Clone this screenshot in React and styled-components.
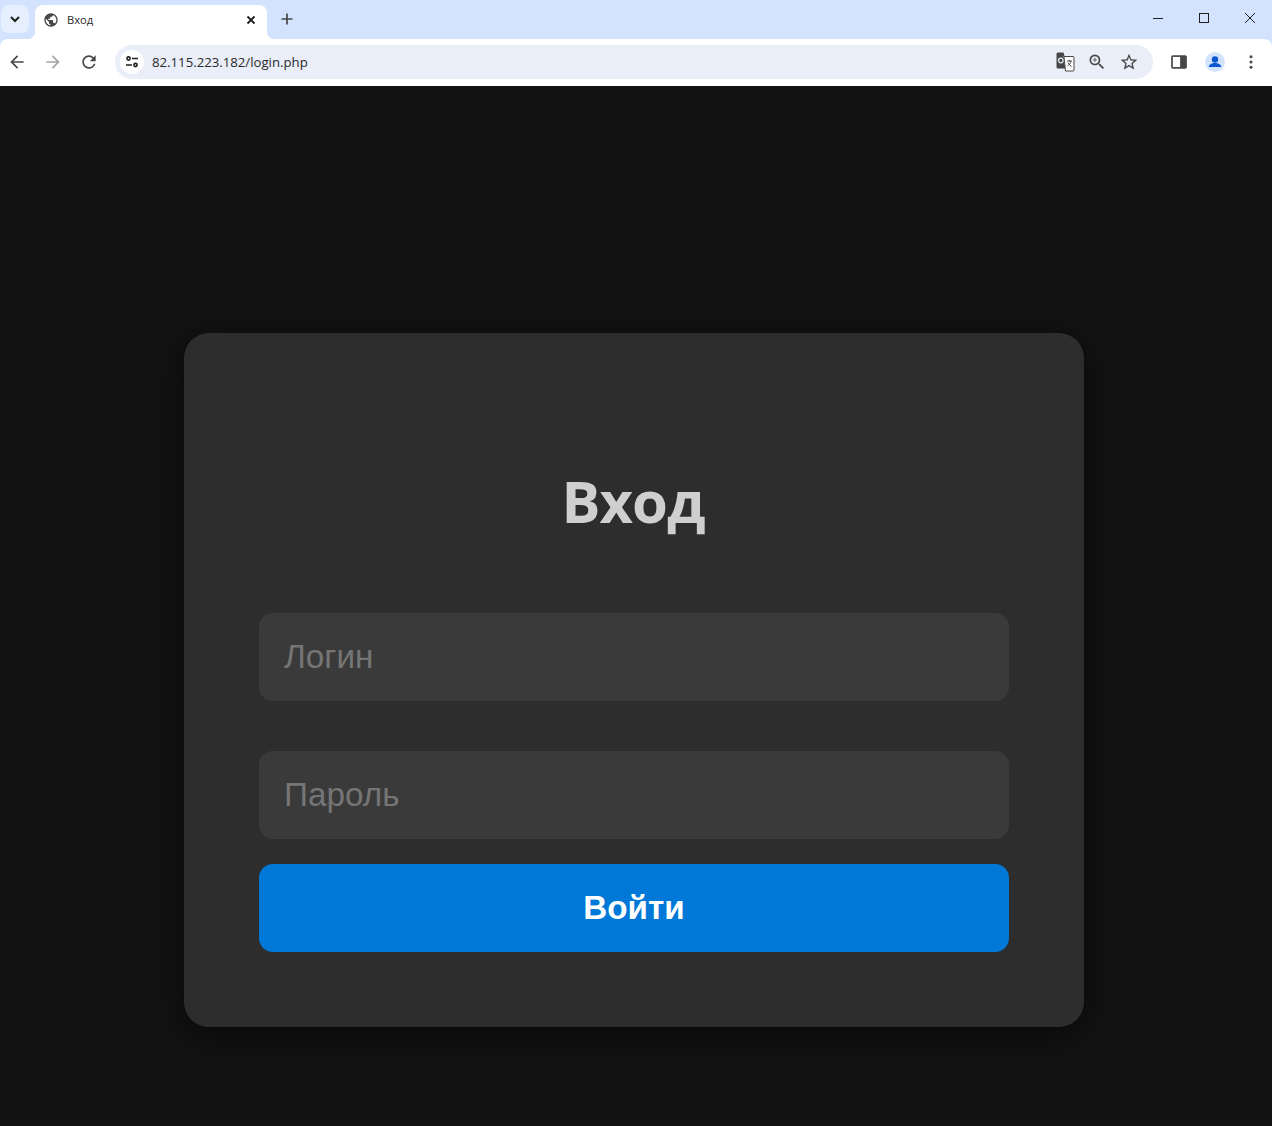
import React from "react";
import styled, { createGlobalStyle } from "styled-components";

const Global = createGlobalStyle`
  html, body { margin: 0; padding: 0; background: #121212; overflow: hidden; }
  * { box-sizing: border-box; }
`;

const Shell = styled.div`
  width: 1272px;
  height: 1126px;
  display: flex;
  flex-direction: column;
  background: #121212;
`;

const Chrome = styled.header`
  background: #d3e3fd;
  flex: none;
`;

const TabStrip = styled.div`
  height: 39px;
  display: flex;
  align-items: flex-start;
  padding-left: 1px;
`;

const TabSearch = styled.button`
  width: 28px;
  height: 28px;
  margin-top: 5px;
  border: 0;
  padding: 0;
  border-radius: 8px;
  background: #e6effe;
  display: flex;
  align-items: center;
  justify-content: center;
`;

const Tab = styled.div`
  position: relative;
  width: 232px;
  height: 34px;
  margin-top: 5px;
  margin-left: 6px;
  padding: 0 8px 5px;
  background: #fff;
  border-radius: 8px 8px 0 0;
  display: flex;
  align-items: center;
  gap: 8px;
  &::before, &::after {
    content: "";
    position: absolute;
    bottom: 0;
    width: 8px;
    height: 8px;
  }
  &::before { left: -8px; background: radial-gradient(circle at 0 0, transparent 8px, #fff 8.5px); }
  &::after { right: -8px; background: radial-gradient(circle at 100% 0, transparent 8px, #fff 8.5px); }
`;

const TabTitle = styled.span`
  flex: 1;
  font: 11.2px/16px "Open Sans", "Noto Sans", sans-serif;
  color: #2a2a2a;
`;

const NewTab = styled.button`
  width: 28px;
  height: 28px;
  margin: 5px 0 0 6px;
  border: 0;
  padding: 0;
  background: transparent;
  display: flex;
  align-items: center;
  justify-content: center;
`;

const Spacer = styled.div`
  flex: 1;
`;

const WindowControl = styled.div`
  width: 46px;
  height: 36px;
  display: flex;
  align-items: center;
  justify-content: center;
  &:last-child { margin-right: -1px; }
`;

const Toolbar = styled.div`
  height: 47px;
  background: #fff;
  border-radius: 8px 8px 0 0;
  display: flex;
  align-items: center;
  padding: 0 3px 1px 0;
`;

const NavButton = styled.button`
  width: 36px;
  height: 36px;
  border: 0;
  padding: 0;
  background: transparent;
  display: flex;
  align-items: center;
  justify-content: center;
  &:first-child { margin-left: -1px; }
`;

const Omnibox = styled.div`
  flex: 1;
  height: 34px;
  margin: 0 8px 0 8px;
  padding: 0 8px 0 5px;
  border-radius: 17px;
  background: #e9eef8;
  display: flex;
  align-items: center;
`;

const SiteChip = styled.div`
  width: 24px;
  height: 24px;
  border-radius: 50%;
  background: #fff;
  display: flex;
  align-items: center;
  justify-content: center;
  margin-right: 8px;
`;

const Url = styled.span`
  flex: 1;
  font: 13.2px "Open Sans", "Noto Sans", sans-serif;
  color: #2a2a2a;
`;

const OmniIcon = styled.div`
  width: 32px;
  height: 32px;
  display: flex;
  align-items: center;
  justify-content: center;
`;

const Main = styled.main`
  flex: 1;
  display: flex;
  justify-content: center;
  align-items: flex-start;
  padding: 247px 4px 0 0;
`;

const Card = styled.form`
  width: 900px;
  height: 694px;
  padding: 75px;
  border-radius: 25px;
  background: #2d2d2d;
  box-shadow: 0 8px 32px rgba(0, 0, 0, 0.5);
  display: flex;
  flex-direction: column;
`;

const Title = styled.h1`
  margin: 0;
  height: 205px;
  padding: 49px 2px 0 0;
  text-align: center;
  font: 700 58px/1.5 "Open Sans", "Noto Sans", sans-serif;
  letter-spacing: -1px;
  color: #cfcfcf;
`;

const Field = styled.input`
  display: block;
  width: 100%;
  height: 88px;
  margin-bottom: ${(p) => p.$gap}px;
  padding: 0 25px;
  border: 0;
  border-radius: 14px;
  outline: none;
  background: #3a3a3a;
  color: #d4d4d4;
  font: 33.3px "Liberation Sans", Arial, sans-serif;
  &::placeholder { color: #757575; opacity: 1; }
`;

const Submit = styled.button`
  width: 100%;
  height: 88px;
  border: 0;
  border-radius: 14px;
  background: #0078d7;
  color: #fff;
  font: 700 33.2px "Liberation Sans", Arial, sans-serif;
`;

const Icon = ({ size = 24, color = "#474747", children, vb = "0 0 24 24" }) => (
  <svg width={size} height={size} viewBox={vb} fill={color}>{children}</svg>
);

export default function App() {
  return (
    <Shell>
      <Global />
      <Chrome>
        <TabStrip>
          <TabSearch>
            <Icon size={14} vb="0 0 14 14" color="none">
              <path d="M3 5l4 4 4-4" stroke="#1f1f1f" strokeWidth="2" fill="none" />
            </Icon>
          </TabSearch>
          <Tab>
            <Icon size={16} color="#474747">
              <path d="M12 2C6.48 2 2 6.48 2 12s4.48 10 10 10 10-4.48 10-10S17.52 2 12 2zm-1 17.93c-3.95-.49-7-3.85-7-7.93 0-.62.08-1.21.21-1.79L9 15v1c0 1.1.9 2 2 2v1.93zm6.9-2.54c-.26-.81-1-1.39-1.9-1.39h-1v-3c0-.55-.45-1-1-1H8v-2h2c.55 0 1-.45 1-1V7h2c1.1 0 2-.9 2-2v-.41c2.93 1.19 5 4.06 5 7.41 0 2.08-.8 3.97-2.1 5.39z" />
            </Icon>
            <TabTitle>Вход</TabTitle>
            <Icon size={16} vb="0 0 16 16" color="none">
              <path d="M4.500 4.500l7 7M11.500 4.500l-7 7" stroke="#1f1f1f" strokeWidth="1.800" fill="none" />
            </Icon>
          </Tab>
          <NewTab>
            <Icon size={16} vb="0 0 16 16" color="none">
              <path d="M8 2.500v11M2.500 8h11" stroke="#474747" strokeWidth="1.700" fill="none" />
            </Icon>
          </NewTab>
          <Spacer />
          <WindowControl>
            <Icon size={12} vb="0 0 12 12" color="none"><path d="M1 6.500h10" stroke="#1f1f1f" fill="none" /></Icon>
          </WindowControl>
          <WindowControl>
            <Icon size={12} vb="0 0 12 12" color="none"><rect x="1.500" y="1.500" width="9" height="9" stroke="#1f1f1f" fill="none" /></Icon>
          </WindowControl>
          <WindowControl>
            <Icon size={12} vb="0 0 12 12" color="none"><path d="M1 1l10 10M11 1L1 11" stroke="#1f1f1f" fill="none" /></Icon>
          </WindowControl>
        </TabStrip>
        <Toolbar>
          <NavButton>
            <Icon size={20}><path d="M20 11H7.830l5.590-5.590L12 4l-8 8 8 8 1.410-1.410L7.830 13H20v-2z" /></Icon>
          </NavButton>
          <NavButton>
            <Icon size={20} color="#a4a4a4"><path d="M4 11h12.170l-5.590-5.590L12 4l8 8-8 8-1.410-1.410L16.170 13H4v-2z" /></Icon>
          </NavButton>
          <NavButton>
            <Icon size={20}><path d="M17.650 6.350A7.958 7.958 0 0 0 12 4c-4.420 0-7.990 3.580-7.990 8s3.570 8 7.990 8c3.730 0 6.840-2.550 7.730-6h-2.080A5.990 5.990 0 0 1 12 18c-3.310 0-6-2.690-6-6s2.690-6 6-6c1.660 0 3.140.69 4.220 1.780L13 11h7V4l-2.350 2.350z" /></Icon>
          </NavButton>
          <Omnibox>
            <SiteChip>
              <Icon size={16} vb="0 0 16 16" color="none">
                <g stroke="#1f1f1f" strokeWidth="1.600" fill="none">
                  <circle cx="4.500" cy="4.500" r="1.600" />
                  <path d="M8 4.500h6M2 11h6" />
                  <circle cx="11.500" cy="11" r="1.600" />
                </g>
              </Icon>
            </SiteChip>
            <Url>82.115.223.182/login.php</Url>
            <OmniIcon>
              <Icon size={20} vb="0 0 20 20" color="none">
                <path d="M1.500 2A1.500 1.500 0 0 1 3 .5h5.500l1 3.500h-1l2 12.500H3A1.500 1.500 0 0 1 1.500 15z" fill="#474747" />
                <circle cx="5.800" cy="8.500" r="2.300" fill="none" stroke="#e9eef8" strokeWidth="1.200" />
                <path d="M9 4.500h9a1 1 0 0 1 1 1v12.500a1 1 0 0 1-1 1h-7.500z" fill="#fff" stroke="#474747" strokeWidth="1" />
                <path d="M12 9h5M14.500 8v1M16 9c-.5 2.500-2 4-3.500 5M13 10.500c.7 1.600 2 3 3.500 4" stroke="#474747" strokeWidth="1" fill="none" />
              </Icon>
            </OmniIcon>
            <OmniIcon>
              <Icon size={20}>
                <path d="M15.500 14h-.79l-.28-.27A6.471 6.471 0 0 0 16 9.500 6.500 6.500 0 1 0 9.500 16c1.610 0 3.090-.59 4.230-1.570l.27.280v.790l5 4.990L20.490 19l-4.990-5zm-6 0C7.010 14 5 11.990 5 9.500S7.010 5 9.500 5 14 7.010 14 9.500 11.990 14 9.500 14z" />
                <path d="M12 10h-2v2H9v-2H7V9h2V7h1v2h2v1z" />
              </Icon>
            </OmniIcon>
            <OmniIcon>
              <Icon size={20}>
                <path d="M22 9.240l-7.190-.62L12 2 9.190 8.630 2 9.240l5.460 4.730L5.820 21 12 17.270 18.180 21l-1.630-7.030L22 9.240zM12 15.400l-3.760 2.270 1-4.280-3.320-2.880 4.380-.38L12 6.100l1.710 4.040 4.380.38-3.320 2.880 1 4.280L12 15.400z" />
              </Icon>
            </OmniIcon>
          </Omnibox>
          <NavButton>
            <Icon size={18} vb="0 0 16 16" color="none">
              <rect x="1" y="2" width="14" height="12" rx="1.500" fill="#474747" />
              <rect x="2.500" y="3.500" width="6.500" height="9" fill="#fff" />
            </Icon>
          </NavButton>
          <NavButton>
            <Icon size={20} vb="0 0 20 20" color="none">
              <circle cx="10" cy="10" r="10" fill="#d3e3fd" />
              <circle cx="10" cy="7.500" r="3.200" fill="#0b57d0" />
              <path d="M3.800 15c0-2.800 3.400-4 6.200-4s6.200 1.200 6.200 4z" fill="#0b57d0" />
            </Icon>
          </NavButton>
          <NavButton>
            <Icon size={16} vb="0 0 16 16">
              <circle cx="8" cy="2.800" r="1.500" />
              <circle cx="8" cy="8" r="1.500" />
              <circle cx="8" cy="13.200" r="1.500" />
            </Icon>
          </NavButton>
        </Toolbar>
      </Chrome>
      <Main>
        <Card>
          <Title>Вход</Title>
          <Field $gap={50} placeholder="Логин" />
          <Field $gap={25} type="password" placeholder="Пароль" />
          <Submit type="button">Войти</Submit>
        </Card>
      </Main>
    </Shell>
  );
}
